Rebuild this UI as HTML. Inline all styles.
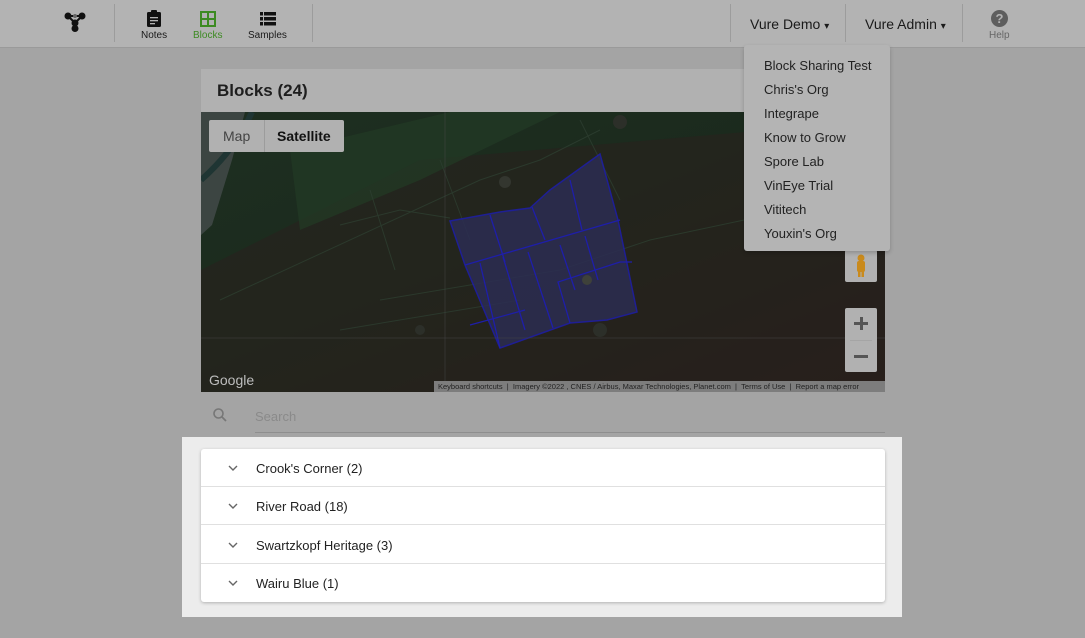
<!DOCTYPE html>
<html><head><style>
*{box-sizing:border-box;margin:0;padding:0}
body{width:1085px;height:638px;overflow:hidden;background:#a4a4a4;font-family:"Liberation Sans",sans-serif;position:relative}
.nav{position:absolute;left:0;top:0;width:1085px;height:48px;background:#b3b3b3;border-bottom:1px solid #9a9a9a}
.sep{position:absolute;top:4px;width:1px;height:38px;background:#9c9c9c}
.ni{position:absolute;top:30px;font-size:10px;color:#1a1a1a;text-align:center}
.dd{position:absolute;top:16px;font-size:14px;color:#1a1a1a}
.card{position:absolute;left:201px;top:69px;width:684px;height:323px;background:#b1b1b1}
.card h1{position:absolute;left:16px;top:12px;font-size:17px;font-weight:bold;color:#1e1e1e}
.map{position:absolute;left:201px;top:112px;width:684px;height:280px;overflow:hidden;background:#1d2a1e}
.menu{position:absolute;left:744px;top:45px;width:146px;height:206px;background:#b4b4b4;border-radius:3px;box-shadow:0 2px 4px rgba(0,0,0,.2)}
.menu div{position:absolute;left:20px;font-size:13px;color:#222}
.hl{position:absolute;left:182px;top:437px;width:720px;height:180px;background:#ececec}
.list{position:absolute;left:201px;top:449px;width:684px;height:153px;background:#fff;border-radius:3px;box-shadow:0 1px 3px rgba(0,0,0,.25)}
.row{position:absolute;left:0;width:684px;height:38px;border-bottom:1px solid #e0e0e0;font-size:13px;color:#222}
.row span{position:absolute;left:55px;top:12px}
.row svg{position:absolute;left:26px;top:15px}
</style></head><body>
<div class="nav">
 <svg style="position:absolute;left:64px;top:12px" width="22" height="20" viewBox="0 0 22 20"><g fill="#111" stroke="#111" stroke-width="2"><line x1="4" y1="4" x2="18" y2="4"/><line x1="4" y1="4" x2="11" y2="11"/><line x1="18" y1="4" x2="11" y2="11"/><line x1="11" y1="11" x2="11" y2="16"/><circle cx="4" cy="4" r="2.5"/><circle cx="18" cy="4" r="2.5"/><circle cx="11" cy="11" r="2.5"/><circle cx="11" cy="16.5" r="2.5"/></g><circle cx="11" cy="4" r="2" fill="#666"/></svg>
 <div class="sep" style="left:114px"></div>
 <svg style="position:absolute;left:147px;top:10px" width="14" height="17" viewBox="0 0 14 17"><rect x="0" y="2" width="14" height="15" rx="1.5" fill="#111"/><rect x="4" y="0" width="6" height="4" rx="1" fill="#111"/><rect x="3" y="7" width="8" height="1.3" fill="#b3b3b3"/><rect x="3" y="10" width="8" height="1.3" fill="#b3b3b3"/><rect x="3" y="13" width="5" height="1.3" fill="#b3b3b3"/></svg>
 <div class="ni" style="left:141px">Notes</div>
 <svg style="position:absolute;left:200px;top:11px" width="16" height="16" viewBox="0 0 16 16"><rect x="1" y="1" width="14" height="14" fill="none" stroke="#3d8a22" stroke-width="2"/><line x1="8" y1="1" x2="8" y2="15" stroke="#3d8a22" stroke-width="2"/><line x1="1" y1="8" x2="15" y2="8" stroke="#3d8a22" stroke-width="2"/></svg>
 <div class="ni" style="left:193px;color:#3d8a22">Blocks</div>
 <svg style="position:absolute;left:260px;top:12px" width="16" height="14" viewBox="0 0 16 14"><g fill="#111"><rect x="0" y="0" width="3" height="3.5"/><rect x="4" y="0" width="12" height="3.5"/><rect x="0" y="5" width="3" height="3.5"/><rect x="4" y="5" width="12" height="3.5"/><rect x="0" y="10" width="3" height="3.5"/><rect x="4" y="10" width="12" height="3.5"/></g></svg>
 <div class="ni" style="left:248px">Samples</div>
 <div class="sep" style="left:312px"></div>
 <div class="sep" style="left:730px"></div>
 <div class="dd" style="left:750px">Vure Demo <span style="font-size:10px">▾</span></div>
 <div class="sep" style="left:845px"></div>
 <div class="dd" style="left:865px">Vure Admin <span style="font-size:10px">▾</span></div>
 <div class="sep" style="left:962px"></div>
 <div style="position:absolute;left:991px;top:10px;width:17px;height:17px;border-radius:50%;background:#5e5e5e;color:#b3b3b3;font-size:13px;font-weight:bold;text-align:center;line-height:17px">?</div>
 <div class="ni" style="left:989px;color:#666">Help</div>
</div>
<div class="card"><h1>Blocks (24)</h1></div>
<div class="map">
<svg width="684" height="280" viewBox="201 112 684 280">
<defs><linearGradient id="g" x1="0" y1="0" x2="1" y2="1"><stop offset="0" stop-color="#1e2f21"/><stop offset=".45" stop-color="#1b2a1d"/><stop offset="1" stop-color="#261d1a"/></linearGradient></defs>
<rect x="201" y="112" width="684" height="280" fill="url(#g)"/>
<polygon points="201,270 420,160 885,120 885,392 201,392" fill="#2a201d" opacity=".55"/>
<polygon points="290,150 450,112 560,112 420,180 300,230" fill="#223a25" opacity=".7"/>
<polygon points="201,112 245,112 232,160 212,225 201,235" fill="#3c4542"/>
<path d="M201 180 Q235 150 252 112" stroke="#1f3533" stroke-width="6" fill="none"/>
<g stroke="#2d3e30" stroke-width="1" fill="none" opacity=".8"><path d="M220 300 L480 180 L540 160 L600 130"/><path d="M340 225 L400 210 L450 218"/><path d="M380 300 L560 270 L650 240 L885 190"/><path d="M370 190 L395 270"/><path d="M440 160 L470 240"/><path d="M580 120 L620 200"/><path d="M340 330 L520 300"/></g>
<polygon points="450,221 500,212 530,208 550,190 600,154 618,220 637,312 607,320 570,323 500,348 465,265" fill="#2c2d52" opacity=".85" stroke="#1e1eaa" stroke-width="1.5"/>
<g stroke="#1e1eaa" stroke-width="1.3" fill="none"><path d="M465,265 L620,220"/><path d="M570,323 L558,282 L620,262 L632,262"/><path d="M490,215 L505,262"/><path d="M532,207 L545,240"/><path d="M570,180 L582,230"/><path d="M480,263 L500,348"/><path d="M503,257 L525,330"/><path d="M528,252 L553,328"/><path d="M560,245 L575,290"/><path d="M585,236 L598,280"/><path d="M470,325 L525,310"/></g>
<circle cx="505" cy="182" r="6" fill="#33362f"/><circle cx="587" cy="280" r="5" fill="#3e413a"/><circle cx="420" cy="330" r="5" fill="#2c2f29"/><circle cx="600" cy="330" r="7" fill="#2c2f29"/><circle cx="620" cy="122" r="7" fill="#2c2f29"/>
<line x1="445" y1="112" x2="445" y2="392" stroke="#444" stroke-width=".5"/><line x1="201" y1="338" x2="885" y2="338" stroke="#444" stroke-width=".5"/>
</svg>
<div style="position:absolute;left:8px;top:8px;width:135px;height:32px;background:#b1b1b1;border-radius:2px;font-size:14px"><span style="position:absolute;left:14px;top:8px;color:#444">Map</span><div style="position:absolute;left:55px;top:0;width:1px;height:32px;background:#9c9c9c"></div><span style="position:absolute;left:68px;top:8px;font-weight:bold;color:#111">Satellite</span></div>
<div style="position:absolute;left:8px;top:260px;font-size:14px;color:#bdbdbd">Google</div>
<div style="position:absolute;left:233px;top:269px;width:451px;height:11px;background:#7d7d7d;font-size:7.5px;color:#222;white-space:nowrap;line-height:11px;padding-left:4px">Keyboard shortcuts &nbsp;| &nbsp;Imagery ©2022 , CNES / Airbus, Maxar Technologies, Planet.com &nbsp;| &nbsp;Terms of Use &nbsp;| &nbsp;Report a map error</div>
<div style="position:absolute;left:644px;top:138px;width:32px;height:32px;background:#b1b1b1;border-radius:2px"><svg width="32" height="32"><circle cx="16" cy="8" r="3.5" fill="#c98a1c"/><rect x="12" y="11" width="8" height="11" rx="2" fill="#c98a1c"/><rect x="13" y="20" width="2.5" height="7" fill="#c98a1c"/><rect x="16.5" y="20" width="2.5" height="7" fill="#c98a1c"/></svg></div>
<div style="position:absolute;left:644px;top:196px;width:32px;height:64px;background:#b1b1b1;border-radius:2px"><div style="position:absolute;left:9px;top:14px;width:14px;height:3px;background:#555"></div><div style="position:absolute;left:14.5px;top:9px;width:3px;height:13px;background:#555"></div><div style="position:absolute;left:5px;top:32px;width:22px;height:1px;background:#a5a5a5"></div><div style="position:absolute;left:9px;top:47px;width:14px;height:3px;background:#555"></div></div>
</div>
<div class="menu">
<div style="top:13px">Block Sharing Test</div><div style="top:37px">Chris's Org</div><div style="top:61px">Integrape</div><div style="top:85px">Know to Grow</div><div style="top:109px">Spore Lab</div><div style="top:133px">VinEye Trial</div><div style="top:157px">Vititech</div><div style="top:181px">Youxin's Org</div>
</div>
<svg style="position:absolute;left:212px;top:407px" width="16" height="16" viewBox="0 0 16 16"><circle cx="6.5" cy="6.5" r="4.5" fill="none" stroke="#777" stroke-width="1.6"/><line x1="10" y1="10" x2="14" y2="14" stroke="#777" stroke-width="1.8"/></svg>
<div style="position:absolute;left:255px;top:409px;font-size:13px;color:#8a8a8a">Search</div>
<div style="position:absolute;left:255px;top:432px;width:630px;height:1px;background:#8e8e8e"></div>
<div class="hl"></div>
<div class="list">
<div class="row" style="top:0"><svg width="12" height="8" viewBox="0 0 12 8"><path d="M2 2 L6 6 L10 2" stroke="#666" stroke-width="1.4" fill="none"/></svg><span>Crook's Corner (2)</span></div>
<div class="row" style="top:38px"><svg width="12" height="8" viewBox="0 0 12 8"><path d="M2 2 L6 6 L10 2" stroke="#666" stroke-width="1.4" fill="none"/></svg><span>River Road (18)</span></div>
<div class="row" style="top:76px;height:39px"><svg width="12" height="8" viewBox="0 0 12 8" style="top:16px"><path d="M2 2 L6 6 L10 2" stroke="#666" stroke-width="1.4" fill="none"/></svg><span style="top:13px">Swartzkopf Heritage (3)</span></div>
<div class="row" style="top:115px;border:none"><svg width="12" height="8" viewBox="0 0 12 8"><path d="M2 2 L6 6 L10 2" stroke="#666" stroke-width="1.4" fill="none"/></svg><span>Wairu Blue (1)</span></div>
</div>
</body></html>
